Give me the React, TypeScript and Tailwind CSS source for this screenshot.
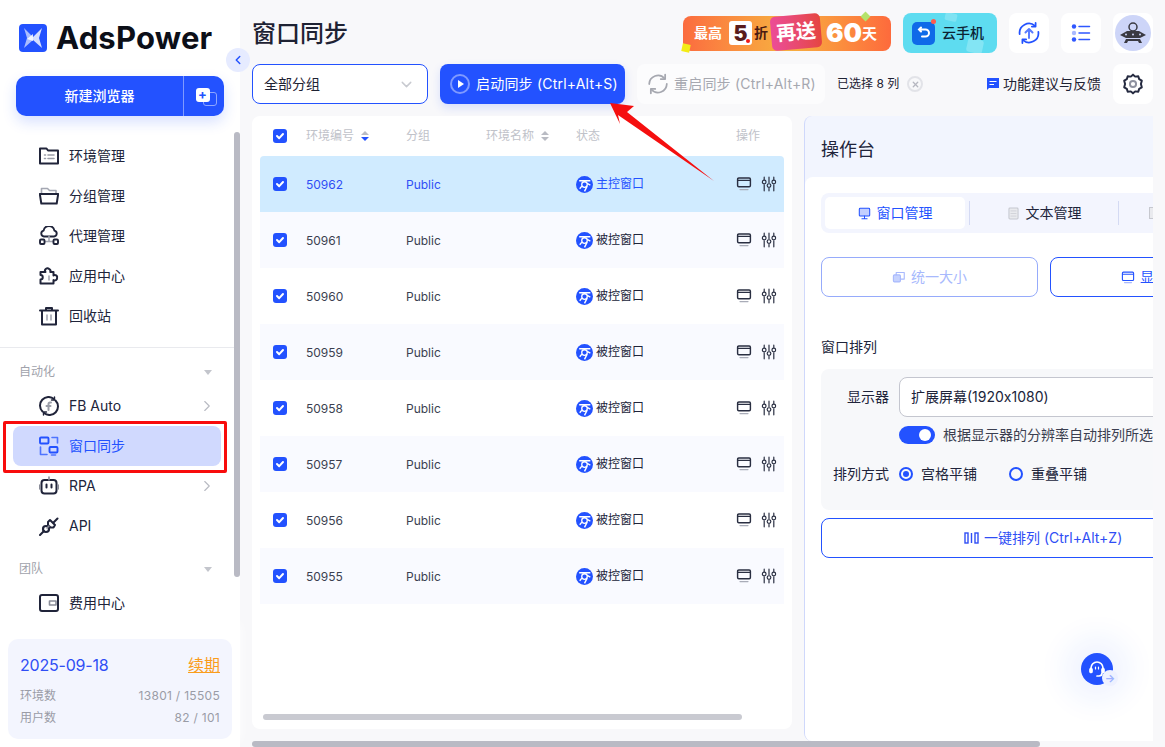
import { ChevronDown, ChevronLeft, ChevronRight, X } from 'lucide-react'
import type { ReactNode } from 'react'

const FONT = "font-['Inter','Noto_Sans_CJK_SC',sans-serif]"

function Svg({ size = 20, children, className }: { size?: number; children: ReactNode; className?: string }) {
  return (
    <svg
      width={size}
      height={size}
      viewBox="0 0 20 20"
      fill="none"
      stroke="currentColor"
      strokeWidth="1.6"
      strokeLinecap="round"
      strokeLinejoin="round"
      className={className}
    >
      {children}
    </svg>
  )
}

function Logo() {
  return (
    <svg width="28" height="28" viewBox="0 0 28 28">
      <rect width="28" height="28" rx="4" fill="#2352ff" />
      <path d="M5 4l9 9v3l-9 8 3-10z" fill="#a9bcff" />
      <path d="M23 4l-9 9v3l9 8-3-10z" fill="#d5deff" />
      <path d="M14 10l-6 5 6 2z" fill="#fff" opacity=".85" />
    </svg>
  )
}

const navIcons: Record<string, ReactNode> = {
  env: (
    <Svg>
      <path d="M1 2.500h6.500l1.500 2h10v13H1z" strokeWidth="2" />
      <path d="M5.500 9h1M9 9h6M5.500 12.500h1M9 12.500h6" stroke="#9a9da8" />
    </Svg>
  ),
  group: (
    <Svg>
      <path d="M2.500 7V2.500h6l2 2h6.500V7" stroke="#a4a7b2" />
      <path d="M.8 8h18.400l-1.500 9.500H2.300z" strokeWidth="2" />
    </Svg>
  ),
  proxy: (
    <Svg>
      <path d="M6 10.500H5a3 3 0 0 1-.4-5.900 5.500 5.500 0 0 1 10.800 0A3 3 0 0 1 15 10.500z" strokeWidth="1.900" />
      <path d="M10 10.500v5M6 15.500h8" stroke="#a4a7b2" />
      <rect x="1" y="13.500" width="4.500" height="4.500" rx="1" strokeWidth="1.900" />
      <rect x="14.500" y="13.500" width="4.500" height="4.500" rx="1" strokeWidth="1.900" />
    </Svg>
  ),
  app: (
    <Svg>
      <path
        d="M1.500 6H6.500a2.200 2.200 0 0 1 3.800-2.800 2.200 2.200 0 0 1 1 2.800h3.200v3.500a2.300 2.300 0 0 1 3.600 2.500 2.300 2.300 0 0 1-3.600 2v3.500H1.500v-4a2.200 2.200 0 0 0 0-4.500z"
        strokeWidth="2"
      />
      <path d="M10 10v4" stroke="#a4a7b2" />
    </Svg>
  ),
  trash: (
    <Svg>
      <path d="M1 4.500h18M7 4.500V2h6v2.500M3 4.500v14h14v-14" strokeWidth="2" />
      <path d="M8 9v5M12 9v5" stroke="#a4a7b2" />
    </Svg>
  ),
  fb: (
    <Svg>
      <path d="M3.500 15.500A8.500 8.500 0 0 1 15 3M16.500 4.500A8.500 8.500 0 0 1 5 17" strokeWidth="2" />
      <path d="M15.500 1v3h-3M4.500 19v-3h3" strokeWidth="1.400" />
      <path d="M12 6.500h-1a1.500 1.500 0 0 0-1.500 1.500v6M7.500 10h4" stroke="#9a9da8" strokeWidth="2" />
    </Svg>
  ),
  sync: (
    <Svg className="text-[#2352ff]">
      <rect x="1" y="1.500" width="8.500" height="6" rx="1" strokeWidth="1.900" />
      <rect x="10.500" y="11" width="8" height="5.500" rx="1" strokeWidth="1.900" />
      <path d="M13 1.500h5.500V7M1.500 11v7.500H8" opacity=".75" />
      <path d="M12.500 19h4" opacity=".75" />
    </Svg>
  ),
  rpa: (
    <Svg>
      <rect x="2.500" y="4" width="15" height="13.500" rx="3" strokeWidth="2" />
      <path d="M7.500 8.500v3M12.500 8.500v3" strokeWidth="2" />
      <path d="M10 1v3M.8 9v4M19.200 9v4" stroke="#8a8d99" />
    </Svg>
  ),
  api: (
    <Svg>
      <path d="M1 19l4-4M14.500 6.500L18.500 2.500" strokeWidth="2" />
      <circle cx="7" cy="13" r="3" strokeWidth="2.200" />
      <path d="M11 4l5 5-1.500 2.500h-3L9 9V6z" strokeWidth="2" />
      <path d="M8 12l2-2" stroke="#8a8d99" />
    </Svg>
  ),
  wallet: (
    <Svg>
      <rect x="1" y="2" width="18" height="16" rx="2" strokeWidth="2" />
      <path d="M10.500 8h6.500v4h-6.500z" stroke="#8a8d99" />
    </Svg>
  ),
}

function NavItem({ icon, label, arrow, active }: { icon: string; label: string; arrow?: boolean; active?: boolean }) {
  return (
    <div
      className={`ml-[13px] mr-[19px] flex h-10 items-center rounded-lg pl-[26px] pr-[5px] text-sm ${
        active ? 'bg-[#d0d9fe] text-[#2352ff]' : 'text-[#20243a]'
      }`}
    >
      <span className="mr-[10px] flex w-5 justify-center">{navIcons[icon]}</span>
      <span className="flex-1">{label}</span>
      {arrow && <ChevronRight size={18} strokeWidth={1.5} className="text-[#b8bac2]" />}
    </div>
  )
}

function SectionTitle({ label }: { label: string }) {
  return (
    <div className="flex h-[26px] items-center justify-between pl-[19px] pr-[28px] text-xs text-[#a0a2ab]">
      <span>{label}</span>
      <span className="h-0 w-0 border-x-[4.500px] border-t-[5px] border-x-transparent border-t-[#c3c5cc]" />
    </div>
  )
}

function Sidebar() {
  return (
    <aside className="relative flex h-full w-[240px] shrink-0 flex-col bg-white">
      <div className="flex h-[76px] items-start pl-[19px] pt-[24px]">
        <Logo />
        <span className="ml-[9px] text-[31px] font-bold leading-[28px] tracking-[0.2px] text-[#0c0f18]">AdsPower</span>
      </div>
      <div className="mx-4 flex h-10 items-center rounded-[10px] bg-[#2352ff] text-sm font-medium text-white shadow-[0_6px_14px_rgba(35,82,255,0.18)]">
        <span className="flex-1 text-center">新建浏览器</span>
        <span className="relative flex h-full w-[41px] items-center justify-center border-l border-[#7f9aff]">
          <span className="absolute left-[19px] top-[16px] h-[14px] w-[14px] rounded-[3px] border border-[#8ea6ff]" />
          <span className="relative -ml-[3px] -mt-[3px] flex h-[14px] w-[14px] items-center justify-center rounded-[3px] bg-white text-[13px] font-bold leading-none text-[#2352ff]">
            +
          </span>
        </span>
      </div>
      <nav className="mt-[20px]">
        <NavItem icon="env" label="环境管理" />
        <NavItem icon="group" label="分组管理" />
        <NavItem icon="proxy" label="代理管理" />
        <NavItem icon="app" label="应用中心" />
        <NavItem icon="trash" label="回收站" />
      </nav>
      <div className="mt-[11px] border-t border-[#e9eaee]" />
      <div className="mt-[11px]">
        <SectionTitle label="自动化" />
      </div>
      <div className="mt-[1px]">
        <NavItem icon="fb" label="FB Auto" arrow />
        <NavItem icon="sync" label="窗口同步" active />
        <NavItem icon="rpa" label="RPA" arrow />
        <NavItem icon="api" label="API" />
      </div>
      <div className="mt-[10px]">
        <SectionTitle label="团队" />
      </div>
      <div className="mt-[1px]">
        <NavItem icon="wallet" label="费用中心" />
      </div>
      <div className="mt-auto bg-white px-2 pb-2 pt-[9px] shadow-[0_-6px_10px_rgba(255,255,255,0.9)]">
        <div className="h-[100px] rounded-[10px] bg-[#f3f5fe] px-3 pt-[14px]">
          <div className="flex items-center justify-between">
            <span className="text-base leading-6 tracking-[-0.2px] text-[#2f4ef5]">2025-09-18</span>
            <span className="text-base leading-6 text-[#fa9d1c] underline">续期</span>
          </div>
          <div className="mt-[8px] flex justify-between text-xs leading-[22px] text-[#9a9ca6]">
            <span>环境数</span>
            <span className="tracking-[0.3px]">13801 / 15505</span>
          </div>
          <div className="flex justify-between text-xs leading-[22px] text-[#9a9ca6]">
            <span>用户数</span>
            <span className="tracking-[0.3px]">82 / 101</span>
          </div>
        </div>
      </div>
      <div className="absolute right-0 top-[132px] h-[445px] w-[6px] rounded-full bg-[#b9bac4]" />
      <div className="absolute -right-[10px] top-[48px] flex h-6 w-6 items-center justify-center rounded-full bg-[#e6ebff] text-[#2352ff]">
        <ChevronLeft size={14} strokeWidth={2.500} />
      </div>
    </aside>
  )
}

function PromoBanner() {
  return (
    <div className="relative flex h-[35px] w-[208px] items-center rounded-[8px] bg-gradient-to-r from-[#fb6b3f] via-[#f6b040] to-[#fd6a3c] pl-[11px] text-white">
      <span className="text-[14px] font-bold leading-none">最高</span>
      <span className="relative ml-[7px] flex h-[24px] w-[23px] items-center justify-center rounded-[3px] bg-white text-[21px] font-black leading-none text-[#5a1c1c]">
        5
        <span className="absolute bottom-[2px] right-[2px] h-[4px] w-[4px] rounded-full bg-[#f01818]" />
      </span>
      <span className="ml-[2px] text-[14px] font-bold leading-none text-[#4b1a12]">折</span>
      <span className="relative z-10 ml-[3px] -mt-[3px] -rotate-[5deg] rounded-[5px] bg-gradient-to-r from-[#ec4c97] to-[#e5453f] px-[5px] py-[3px] text-[20px] font-bold leading-[28px]">
        再送
      </span>
      <span className="ml-[5px] text-[26px] font-black leading-none">60</span>
      <span className="text-[15px] font-bold leading-none">天</span>
      <span className="absolute -left-[1px] bottom-[-1px] h-[8px] w-[8px] rotate-12 bg-[#f3ec15]" />
      <span className="absolute right-[22px] -top-[3px] h-[7px] w-[7px] rotate-45 bg-[#b4e36b]" />
    </div>
  )
}

function CloudPhone() {
  return (
    <div className="relative flex h-10 w-[94px] items-center overflow-hidden rounded-lg bg-[#5edcf0] pl-[9px]">
      <span className="absolute left-[42px] top-0 h-[8px] w-[12px] rotate-12 rounded-[2px] bg-[#7fe3f3]" />
      <span className="absolute bottom-0 left-[64px] h-[14px] w-[16px] rotate-12 rounded-[3px] bg-[#83e5f4]" />
      <span className="relative flex h-[23px] w-[23px] items-center justify-center rounded-[5px] bg-[#0f6ae8]">
        <svg width="14" height="14" viewBox="0 0 14 14" fill="none" stroke="#fff" strokeWidth="2" strokeLinecap="round">
          <path d="M2 3.500h6.500a3.500 3.500 0 0 1 0 7H5M4 1.500L2 3.500l2 2" />
        </svg>
        <span className="absolute -right-[1px] -top-[3px] h-[5px] w-[5px] rounded-full bg-[#ff5a4c]" />
      </span>
      <span className="relative ml-[7px] text-sm font-medium text-[#0d2333]">云手机</span>
    </div>
  )
}

function IconBox({ children }: { children: ReactNode }) {
  return <div className="flex h-10 w-10 items-center justify-center rounded-lg bg-white">{children}</div>
}

function Header() {
  return (
    <div className="flex h-[64px] items-center pt-[2px]">
      <h1 className="flex-1 pt-[2px] text-2xl font-medium text-[#1e2233]">窗口同步</h1>
      <div className="flex items-center gap-3">
        <PromoBanner />
        <CloudPhone />
        <IconBox>
          <Svg size={22} className="text-[#2352ff]">
            <path d="M1.500 11A8.500 8.500 0 0 1 15.500 3.500M18.500 9A8.500 8.500 0 0 1 4.500 16.500" />
            <path d="M16 .8v3.400h-3.400M4 19.200v-3.400h3.400" />
            <path d="M10 14.500V6.500M6.800 9.500L10 6.300l3.200 3.200" stroke="#5a7cff" strokeWidth="1.800" />
          </Svg>
        </IconBox>
        <IconBox>
          <Svg size={20} className="text-[#2f57ff]">
            <circle cx="3" cy="3.500" r="2.200" fill="currentColor" stroke="none" />
            <circle cx="3" cy="10" r="2.200" fill="#a9b9ff" stroke="none" />
            <circle cx="3" cy="16.500" r="2.200" fill="currentColor" stroke="none" />
            <path d="M8 3.500h10.500M8 10h10.500M8 16.500h10.500" strokeWidth="1.500" />
          </Svg>
        </IconBox>
        <IconBox>
          <span className="flex h-9 w-9 items-center justify-center rounded-full bg-[#cdd5f8]">
            <svg width="28" height="24" viewBox="0 0 28 24" fill="#3a3a42">
              <circle cx="14" cy="6" r="4" fill="none" stroke="#3a3a42" strokeWidth="1.500" />
              <path d="M1 14l7-4h12l7 4-6 3H7z" />
              <circle cx="7" cy="13.500" r="1" fill="#cdd5f8" />
              <circle cx="14" cy="13.500" r="1" fill="#cdd5f8" />
              <circle cx="21" cy="13.500" r="1" fill="#cdd5f8" />
              <path d="M7 18h14l2 4h-3l-1-2H9l-1 2H5z" />
            </svg>
          </span>
        </IconBox>
      </div>
    </div>
  )
}

function Toolbar() {
  return (
    <div className="flex h-10 items-center">
      <div className="flex h-10 w-[176px] items-center justify-between rounded-lg border border-[#2352ff] bg-white pl-[11px] pr-[12px] text-sm text-[#1e2233]">
        全部分组
        <ChevronDown size={17} className="text-[#c8cad0]" />
      </div>
      <button className="ml-3 flex h-10 w-[185px] items-center whitespace-nowrap rounded-lg bg-[#2352ff] pl-[10px] text-sm tracking-[0.2px] text-white shadow-[0_4px_10px_rgba(35,82,255,0.15)]">
        <span className="mr-[6px] flex h-[20px] w-[20px] items-center justify-center rounded-full border-2 border-[#7f9aff]">
          <span className="ml-[1px] h-0 w-0 border-y-[4px] border-l-[6px] border-y-transparent border-l-white" />
        </span>
        启动同步 (Ctrl+Alt+S)
      </button>
      <div className="ml-3 flex h-10 w-[188px] items-center whitespace-nowrap rounded-lg bg-[#fcfcfd] pl-[10px] text-sm tracking-[0.2px] text-[#a6a8b0]">
        <Svg size={22} className="mr-[5px] text-[#a6a8b0]">
          <path d="M2 10a8 8 0 0 1 14-5M18 10a8 8 0 0 1-14 5" />
          <path d="M16.500 1.500V5.500h-4M3.500 18.500V14.500h4" />
        </Svg>
        重启同步 (Ctrl+Alt+R)
      </div>
      <span className="ml-3 text-xs text-[#1e2233]">已选择 8 列</span>
      <span className="ml-[8px] flex h-[16px] w-[16px] items-center justify-center rounded-full border-2 border-[#e2e3e8] text-[#b5b7c0]">
        <X size={9} strokeWidth={3.500} />
      </span>
      <span className="ml-auto flex items-center text-sm text-[#1e2233]">
        <svg width="12" height="12" viewBox="0 0 12 12" className="mr-[4px]">
          <path d="M0 0h12v10H2l-2 2z" fill="#2352ff" />
          <path d="M2.500 3.500h7M2.500 6.500h4.500" stroke="#fff" />
        </svg>
        功能建议与反馈
      </span>
      <div className="ml-3">
        <IconBox>
          <Svg size={22} className="text-[#252a40]">
            <path
              d="M10 1.500l2 1.800 2.800-.3.800 2.600 2.400 1.400-.800 3 .800 3-2.400 1.400-.800 2.600-2.800-.3-2 1.800-2-1.800-2.800.3-.800-2.600L2 13l.800-3-.800-3 2.400-1.400.800-2.600 2.800.3z"
              strokeWidth="1.800"
            />
            <circle cx="10" cy="10" r="2.800" stroke="#8f92a0" strokeWidth="1.800" />
          </Svg>
        </IconBox>
      </div>
    </div>
  )
}

function Checkbox() {
  return (
    <span className="flex h-[14px] w-[14px] items-center justify-center rounded-[3px] bg-[#2352ff]">
      <svg width="10" height="10" viewBox="0 0 10 10" fill="none" stroke="#fff" strokeWidth="2" strokeLinecap="round" strokeLinejoin="round">
        <path d="M2 5l2.200 2.200L8 3" />
      </svg>
    </span>
  )
}

function SortArrows({ active }: { active?: boolean }) {
  return (
    <span className="ml-[7px] inline-flex flex-col gap-[2px]">
      <span className="h-0 w-0 border-x-[4px] border-b-[4px] border-x-transparent border-b-[#b9bbc3]" />
      <span
        className={`h-0 w-0 border-x-[4px] border-t-[4px] border-x-transparent ${
          active ? 'border-t-[#2352ff]' : 'border-t-[#b9bbc3]'
        }`}
      />
    </span>
  )
}

function ChromeBadge() {
  return (
    <svg width="17" height="17" viewBox="0 0 16 16" className="mr-[3px]">
      <circle cx="8" cy="8" r="8" fill="#2352ff" />
      <circle cx="8" cy="8" r="2.600" fill="none" stroke="#fff" strokeWidth="1.200" />
      <path d="M3 4.500h10.500M5.500 9.500L3.500 12M10.500 9.500L8 14.500M10.500 7l3 1.500" stroke="#fff" strokeWidth="1.300" />
    </svg>
  )
}

const GRID = 'grid grid-cols-[46px_100px_80px_90px_160px_48px] items-center'

const rows = ['50962', '50961', '50960', '50959', '50958', '50957', '50956', '50955']

function TableCard() {
  return (
    <div className="relative h-[613px] w-[540px] shrink-0 rounded-lg bg-white px-2">
      <div className={`${GRID} h-10 text-xs text-[#c0c2c9]`}>
        <span className="flex justify-center pr-[6px]">
          <Checkbox />
        </span>
        <span className="flex items-center">
          环境编号
          <SortArrows active />
        </span>
        <span>分组</span>
        <span className="flex items-center">
          环境名称
          <SortArrows />
        </span>
        <span>状态</span>
        <span>操作</span>
      </div>
      {rows.map((id, i) => {
        const master = i === 0
        return (
          <div
            key={id}
            className={`${GRID} h-14 text-xs ${
              master ? 'rounded-t-[4px] bg-[#d0ebff]' : i % 2 === 1 ? 'bg-[#f9faff]' : 'bg-white'
            } ${master ? 'text-[#2f4ef5]' : 'text-[#3b3f50]'}`}
          >
            <span className="flex justify-center pr-[6px]">
              <Checkbox />
            </span>
            <span className="pt-[2px]">{id}</span>
            <span className="pt-[2px]">Public</span>
            <span />
            <span className="flex items-center">
              <ChromeBadge />
              <span className={master ? 'text-[#2352ff]' : 'text-[#20243a]'}>{master ? '主控窗口' : '被控窗口'}</span>
            </span>
            <span className="flex items-center gap-[9px] text-[#2a2f42]">
              <Svg size={16}>
                <rect x="2" y="2.500" width="16" height="11" rx="1.500" strokeWidth="1.800" />
                <path d="M2.500 5.500h15" strokeWidth="1.500" />
                <path d="M5 17h10" stroke="#a9acb8" strokeWidth="1.500" />
              </Svg>
              <Svg size={16}>
                <path d="M4 1.500v3M4 11v7.500M10 1.500v7M10 15.500v3M16 1.500v3M16 11v7.500" strokeWidth="1.500" />
                <circle cx="4" cy="7.500" r="2.300" strokeWidth="1.500" />
                <circle cx="10" cy="12" r="2.300" strokeWidth="1.500" />
                <circle cx="16" cy="7.500" r="2.300" strokeWidth="1.500" />
              </Svg>
            </span>
          </div>
        )
      })}
      <div className="absolute bottom-[9px] left-[11px] h-[6px] w-[479px] rounded-full bg-[#c9cad1]" />
    </div>
  )
}

function Console() {
  return (
    <div className="relative h-[625px] w-[349px] shrink-0 overflow-hidden rounded-l-lg border-l border-[#cfd8fb] bg-[#f2f5fe]">
      <div className="flex h-[61px] items-center pl-4 pt-[6px] text-lg text-[#20243a]">操作台</div>
      <div className="h-full w-[520px] rounded-tl-lg bg-white pl-4 pt-4">
        <div className="flex h-10 w-[460px] items-center rounded-lg bg-[#f3f5fe] pl-1 text-sm">
          <div className="flex h-8 w-[140px] shrink-0 items-center justify-center gap-[6px] rounded-[5px] bg-white text-[#2352ff]">
            <Svg size={13} className="text-[#2352ff]">
              <rect x="2" y="2" width="16" height="12" rx="1.500" fill="#c3cfff" />
              <path d="M10 14v4M6 18h8" />
            </Svg>
            窗口管理
          </div>
          <span className="ml-[4px] h-6 w-px shrink-0 bg-[#d4daf3]" />
          <div className="flex h-8 w-[148px] shrink-0 items-center justify-center gap-[6px] text-[#20243a]">
            <Svg size={13} className="text-[#c6c8cf]">
              <rect x="3" y="1.500" width="14" height="17" rx="1.500" fill="#e9eaee" />
              <path d="M6 6h8M6 10h8M6 14h8" strokeWidth="1" />
            </Svg>
            文本管理
          </div>
          <span className="h-6 w-px shrink-0 bg-[#d4daf3]" />
          <span className="ml-[30px] h-3 w-3 border border-[#c6c8cf] bg-[#e9eaee]" />
        </div>
        <div className="mt-6 flex gap-3">
          <div className="flex h-10 w-[217px] items-center justify-center gap-[5px] rounded-lg border border-[#96abfb] text-sm text-[#a8b9fd]">
            <Svg size={14}>
              <rect x="2" y="7" width="10" height="10" rx="1.500" fill="#c6d2fe" />
              <path d="M6 7V3.500h11.500V13H12" />
            </Svg>
            统一大小
          </div>
          <div className="flex h-10 w-[217px] items-center justify-center gap-[5px] rounded-lg border border-[#2352ff] text-sm text-[#2352ff]">
            <Svg size={14}>
              <rect x="2" y="3" width="16" height="12" rx="1.500" />
              <path d="M2.500 6h15" />
              <path d="M5 18h10" stroke="#a9b9ff" />
            </Svg>
            显示窗口
          </div>
        </div>
        <div className="mt-[40px] text-sm leading-[20px] text-[#20243a]">窗口排列</div>
        <div className="mt-[12px] h-[141px] w-[460px] rounded-lg bg-[#f7f8fa] pt-2">
          <div className="flex h-10 items-center">
            <span className="w-[68px] text-right text-sm text-[#20243a]">显示器</span>
            <div className="ml-[10px] flex h-10 w-[360px] items-center rounded-lg border border-[#c4c6cf] bg-white pl-[11px] text-sm text-[#20243a]">
              扩展屏幕(1920x1080)
            </div>
          </div>
          <div className="ml-[78px] mt-[9px] flex h-[18px] items-center whitespace-nowrap text-sm text-[#3b3f50]">
            <span className="mr-[8px] flex h-[18px] w-9 shrink-0 items-center justify-end rounded-full bg-[#2352ff] pr-[4px]">
              <span className="h-[12px] w-[12px] rounded-full bg-white" />
            </span>
            根据显示器的分辨率自动排列所选窗口
          </div>
          <div className="mt-[20px] flex h-5 items-center text-sm text-[#20243a]">
            <span className="w-[68px] text-right">排列方式</span>
            <span className="ml-[10px] flex h-[14px] w-[14px] items-center justify-center rounded-full border-2 border-[#2352ff]">
              <span className="h-[6px] w-[6px] rounded-full bg-[#2352ff]" />
            </span>
            <span className="ml-[8px]">宫格平铺</span>
            <span className="ml-[32px] h-[14px] w-[14px] rounded-full border-2 border-[#2352ff]" />
            <span className="ml-[8px]">重叠平铺</span>
          </div>
        </div>
        <div className="mt-2 flex h-10 w-[460px] items-center rounded-lg border border-[#2352ff] pl-[142px] text-sm text-[#2f4ef5]">
          <svg width="15" height="12" viewBox="0 0 15 12" fill="none" stroke="currentColor" strokeWidth="1.400" className="mr-[5px]">
            <rect x="1" y="1" width="3" height="10" />
            <path d="M7.500 1v10" />
            <rect x="11" y="1" width="3" height="10" />
          </svg>
          一键排列 (Ctrl+Alt+Z)
        </div>
      </div>
      <div className="absolute left-[276px] top-[537px] flex h-8 w-8 items-center justify-center rounded-full bg-[#2352ff] shadow-[0_0_30px_16px_rgba(35,82,255,0.07)]">
        <svg width="18" height="18" viewBox="0 0 18 18" fill="none" stroke="#fff" strokeWidth="1.700" strokeLinecap="round">
          <path d="M3 10V8a6 6 0 0 1 12 0v2" />
          <rect x="2" y="8.500" width="2" height="4" rx="1" fill="#fff" />
          <rect x="14" y="8.500" width="2" height="4" rx="1" fill="#fff" />
          <path d="M14 13a3 3 0 0 1-3 3H9" />
          <path d="M7.500 7v2M10.500 7v2" strokeWidth="1.200" />
        </svg>
        <span className="absolute -bottom-[1px] -right-[5px] flex h-4 w-4 items-center justify-center rounded-full bg-[#eef1ff] text-[11px] font-bold leading-none text-[#9db1ff]">
          →
        </span>
      </div>
    </div>
  )
}

function Annotations() {
  return (
    <>
      <div className="pointer-events-none absolute left-[3px] top-[421px] h-[52px] w-[224px] rounded-[2px] border-[3px] border-[#f80c0c]" />
      <svg className="pointer-events-none absolute left-0 top-0" width="1165" height="747">
        <polygon points="610,103 634,106 627,112 714,181 618,115 620,124" fill="#f50f0f" />
      </svg>
    </>
  )
}

export default function App() {
  return (
    <div className={`${FONT} relative flex h-[747px] w-[1165px] overflow-hidden bg-[#f8f8fa]`}>
      <Sidebar />
      <main className="flex min-w-0 flex-1 flex-col pl-3 pr-3">
        <Header />
        <Toolbar />
        <div className="mt-3 flex gap-3">
          <TableCard />
          <Console />
        </div>
      </main>
      <div className="absolute bottom-0 left-[252px] h-[6px] w-[788px] rounded-full bg-[#b9bac4]" />
      <Annotations />
    </div>
  )
}
